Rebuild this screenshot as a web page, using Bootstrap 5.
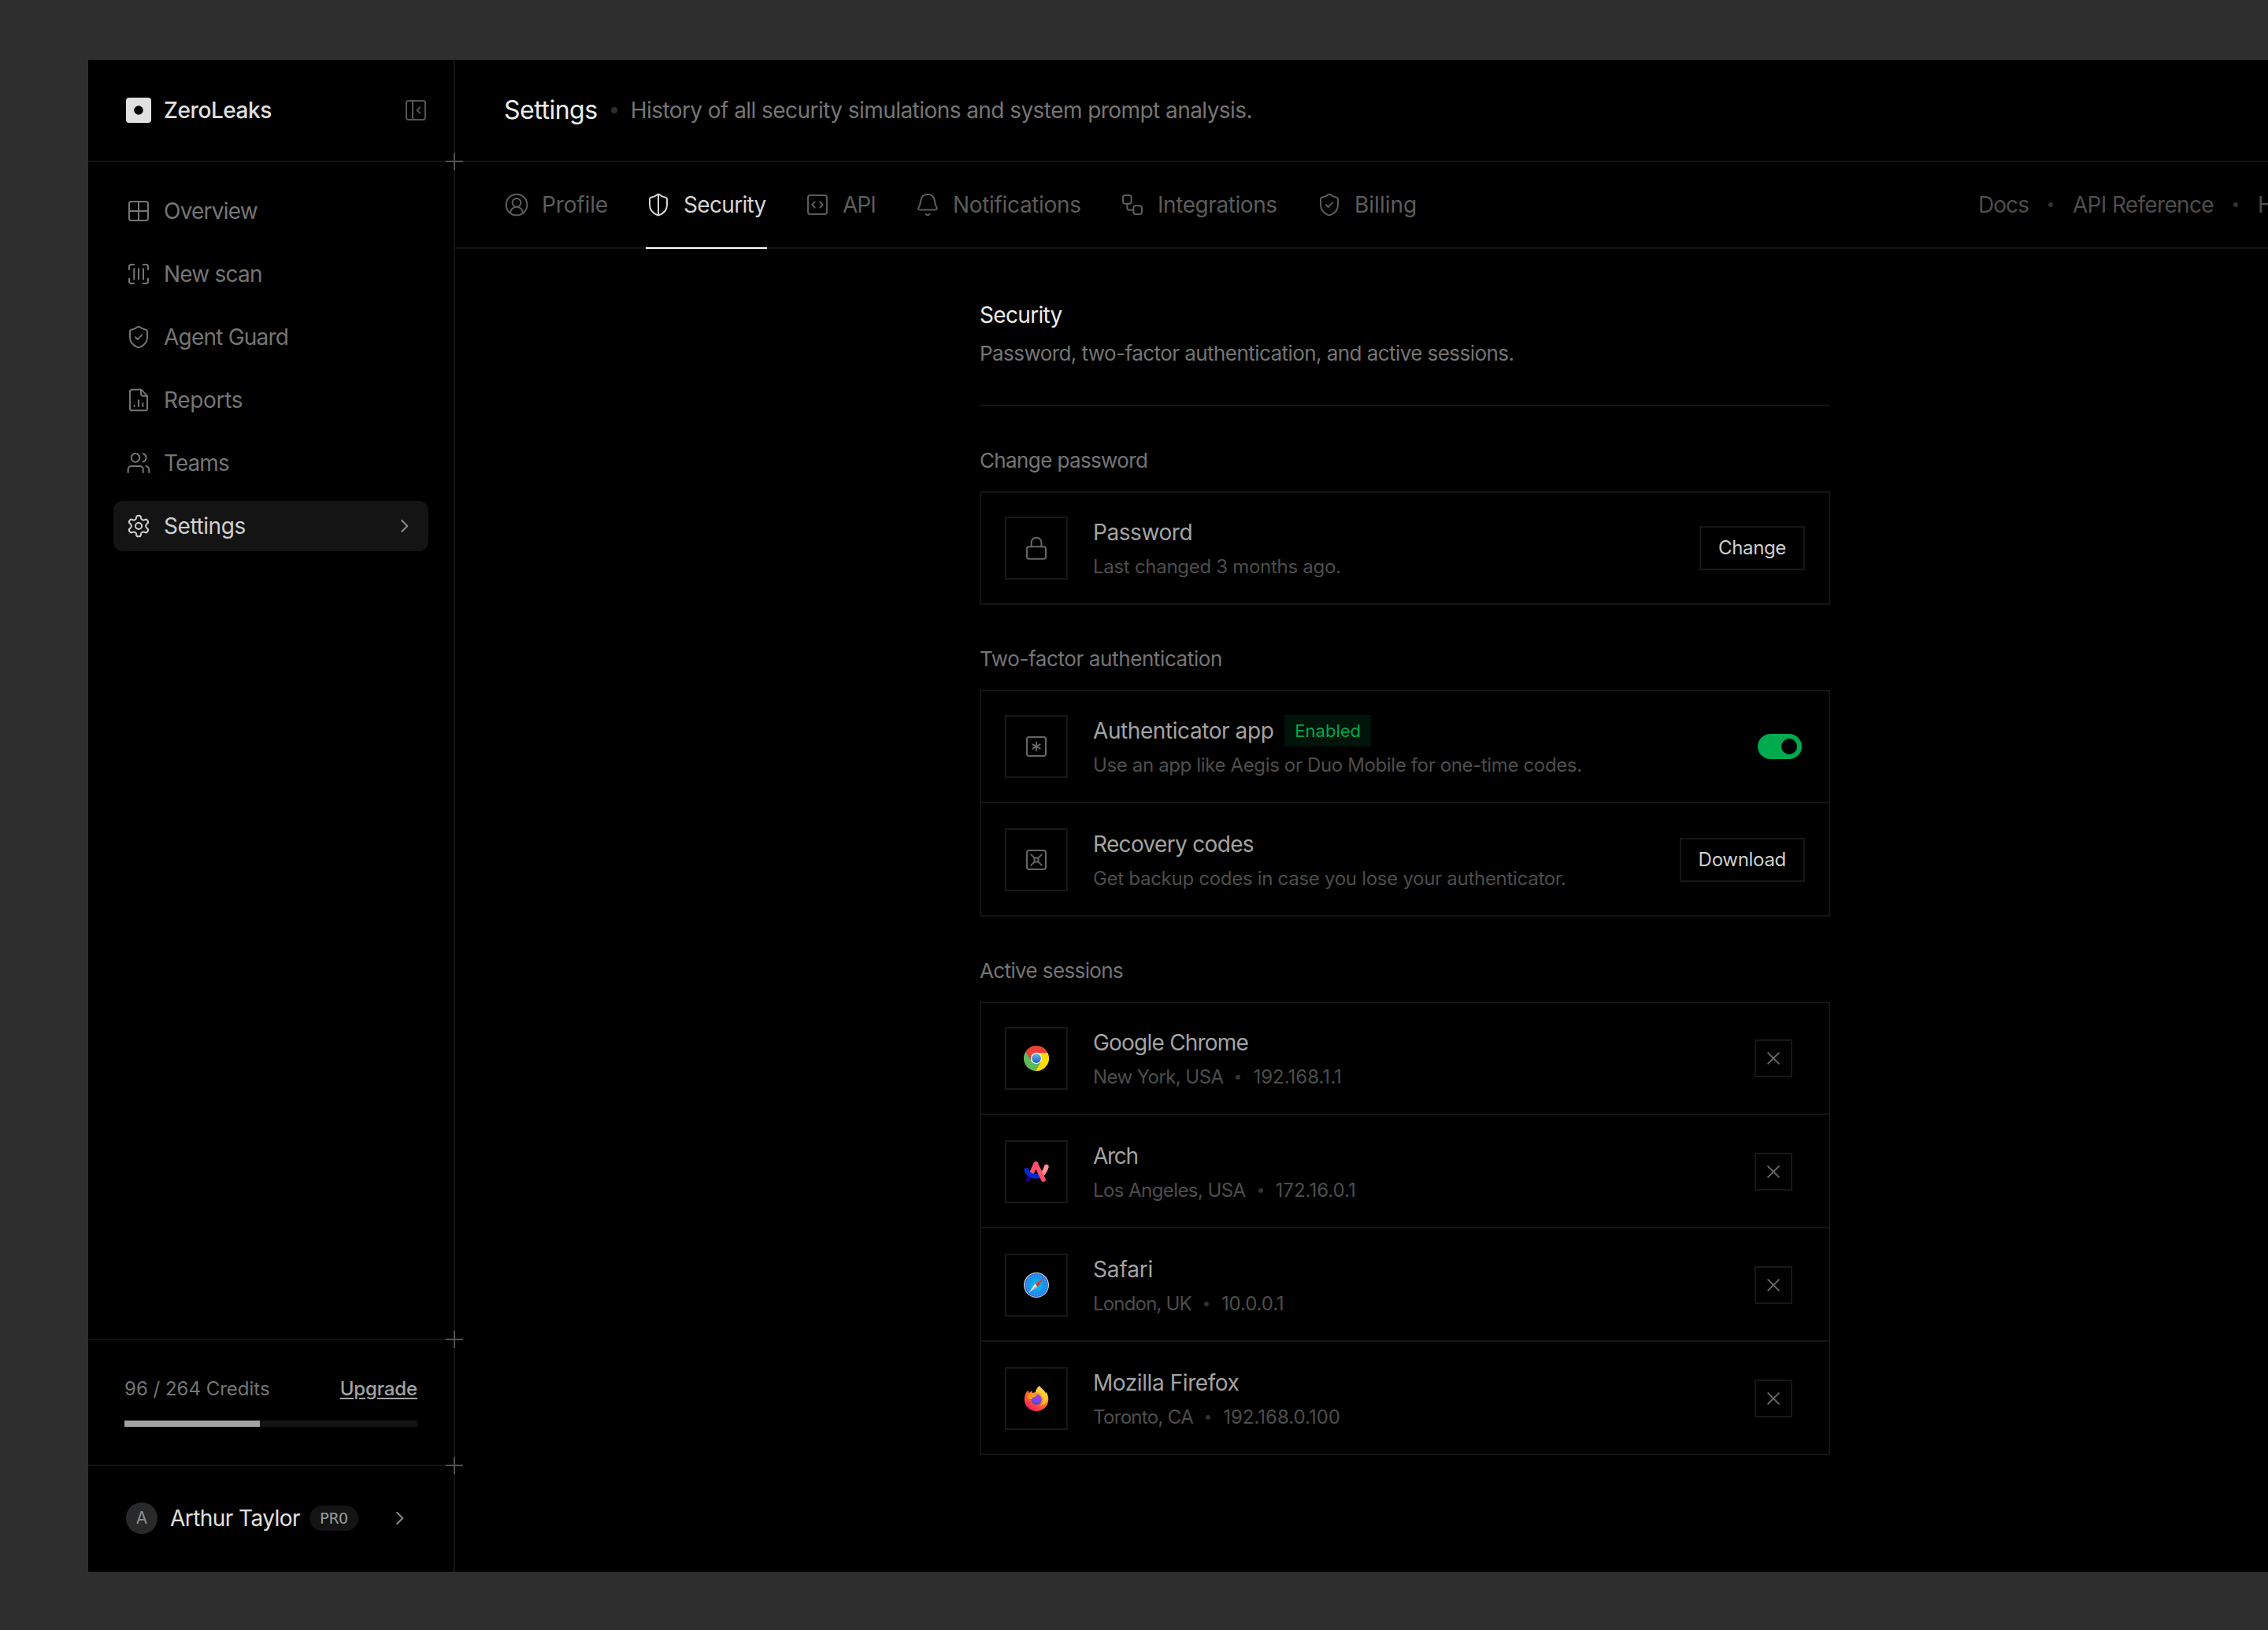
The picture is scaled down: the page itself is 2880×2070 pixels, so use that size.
<!DOCTYPE html>
<html lang="en">
<head>
<meta charset="utf-8">
<meta name="viewport" content="width=device-width, initial-scale=1">
<title>ZeroLeaks – Settings</title>
<link href="https://cdn.jsdelivr.net/npm/bootstrap@5.3.0/dist/css/bootstrap.min.css" rel="stylesheet">
<style>
  :root { --line: #141414; --ink: #ededed; --ink-2: #a3a3a3; --ink-3: #757575; --ink-4: #5c5c5c; --ink-5: #4d4d4d; }
  body { background: #2e2e2e; padding: 76px 0 0 112px; overflow: hidden; height: 2070px; font-family: Inter, "Liberation Sans", sans-serif; font-size: 28px; line-height: 40px; color: var(--ink-2); letter-spacing: -.02em; }
  a { color: inherit; text-decoration: none; }
  svg { flex: none; display: block; }
  .ico { width: 32px; height: 32px; fill: none; stroke: currentColor; stroke-width: 1.5; stroke-linecap: round; stroke-linejoin: round; }
  .app-frame { width: 2880px; height: 1920px; background: #000; }

  /* tracking steps */
  .tr0 { letter-spacing: 0; } .tr5 { letter-spacing: -.005em; } .tr12 { letter-spacing: -.012em; } .tr15 { letter-spacing: -.015em; }
  .tr24 { letter-spacing: -.024em; } .tr28 { letter-spacing: -.028em; } .tr34 { letter-spacing: -.034em; } .tr45 { letter-spacing: -.045em; }

  /* sidebar */
  .side { width: 466px; flex: none; border-right: 2px solid var(--line); }
  .side-head { height: 130px; padding: 0 32px 0 48px; border-bottom: 2px solid var(--line); }
  .brand-name { color: #e0e0e0; font-weight: 500; }
  .side-nav { padding: 30px 32px 0; gap: 16px; }
  .side-link { height: 64px; padding: 0 14px 0 16px; gap: 16px; border-radius: 12px; color: var(--ink-3); }
  .side-link.current { background: #141414; color: #d0d0d0; }
  .chev { color: #8a8a8a; }
  .credit-box { height: 160px; border-top: 2px solid var(--line); padding: 46px 46px 0; font-size: 24px; line-height: 32px; color: var(--ink-3); }
  .upgrade { color: var(--ink-2); font-weight: 500; text-decoration: underline; text-decoration-thickness: 1.5px; text-underline-offset: 3px; }
  .meter { height: 8px; margin-top: 24px; border-radius: 0; background: #141414; }
  .meter .progress-bar { background: #a3a3a3; }
  .user-box { height: 136px; border-top: 2px solid var(--line); padding: 0 52px 2px 48px; }
  .user-name { color: #e0e0e0; }
  .face { width: 40px; height: 40px; background: #292929; color: #8f8f8f; font-size: 21px; letter-spacing: 0; }
  .pro { height: 32px; padding: 0 13px; margin-left: 12px; border-radius: 16px; background: #141414; color: #999; font: 20px/32px "DejaVu Sans Mono", monospace; letter-spacing: 0; }
  .cross::after, .cross-top::after { content: ""; position: absolute; right: -12px; width: 22px; height: 22px; background: linear-gradient(#525252,#525252) center/100% 2px no-repeat, linear-gradient(#525252,#525252) center/2px 100% no-repeat; }
  .cross::after { bottom: -12px; } .cross-top::after { top: -12px; }

  /* header + tabs */
  .page-head { height: 130px; padding: 0 0 0 62px; gap: 17px; border-bottom: 2px solid var(--line); color: var(--ink-3); }
  .page-name { font-size: 32px; color: var(--ink); font-weight: 400; margin: 0; }
  .pt { flex: none; border-radius: 50%; background: #333; width: 6px; height: 6px; }
  .pt-lg { width: 8px; height: 8px; background: #2e2e2e; }
  .tab-row { height: 110px; padding-left: 62px; border-bottom: 2px solid var(--line); color: var(--ink-4); }
  .tab-set { gap: 48px; }
  .tab-item { gap: 16px; margin-bottom: -2px; border-bottom: 2px solid transparent; white-space: nowrap; }
  .tab-item.current { color: #d6d6d6; border-bottom-color: #fff; }
  .tab-item:nth-child(1) { width: 132px; }
  .tab-item:nth-child(2) { width: 154px; }
  .tab-item:nth-child(3) { width: 92px; }
  .tab-item:nth-child(4) { width: 212px; }
  .tab-item:nth-child(5) { width: 202px; }
  .doc-links { width: 480px; gap: 25px; color: var(--ink-5); white-space: nowrap; }

  /* settings column */
  .pane { width: 1080px; margin-left: 666px; padding-top: 64px; }
  .pane-head { padding-bottom: 47px; border-bottom: 2px solid var(--line); }
  .pane-head h2 { font-size: 28px; line-height: 40px; font-weight: 400; color: var(--ink); margin: 0 0 11px; }
  .pane-head p, .group-name { font-size: 26px; line-height: 36px; color: var(--ink-3); margin: 0; font-weight: 400; }
  .group-name { margin: 51px 0 21px; }
  .panel { border: 2px solid var(--line); }
  .line-item { padding: 30px; border-bottom: 2px solid var(--line); gap: 32px; }
  .line-item:last-child { border-bottom: 0; }
  .line-item + .line-item { padding-top: 32px; }
  .tile { width: 80px; height: 80px; flex: none; border: 2px solid #171717; color: #666; }
  .words { height: 80px; }
  .words .sub { font-size: 24px; line-height: 32px; color: var(--ink-5); margin-top: 8px; }
  .on-tag { font-size: 22px; line-height: 40px; height: 40px; padding: 0 13px; margin-left: 14px; background: #001409; color: #00a64d; }
  .act { height: 56px; padding: 0 22px; border: 2px solid #171717; border-radius: 0; font-size: 24px; line-height: 52px; color: #cfcfcf; }
  .close-btn { width: 48px; height: 48px; border: 2px solid #171717; margin-right: 16px; color: #6b6b6b; background: none; padding: 0; }
  .close-btn svg { overflow: visible; }
  .toggle { width: 56px; height: 32px; border-radius: 16px; background: #00ab4f; padding: 0 6px; margin-right: 4px; }
  .toggle span { width: 20px; height: 20px; border-radius: 50%; background: #000; }
</style>
<script src="https://cdn.jsdelivr.net/npm/bootstrap@5.3.0/dist/js/bootstrap.bundle.min.js"></script>
</head>
<body>

<svg width="0" height="0" class="position-absolute" aria-hidden="true">
  <defs>
    <symbol id="i-chev" viewBox="0 0 24 24"><path d="M9.2 6.7 14.5 12 9.2 17.3"/></symbol>
    <symbol id="i-shield" viewBox="0 0 24 24"><path id="shield-line" d="M10.9 2.5C9.6 3.7 7.4 4.6 5.1 5c-.8.15-1.35.7-1.35 1.5V12c0 5.3 3.2 8.2 7.4 9.8.6.22 1.1.22 1.7 0 4.2-1.6 7.4-4.5 7.4-9.8V6.500c0-.8-.55-1.35-1.35-1.5-2.3-.4-4.5-1.3-5.8-2.5-.7-.6-1.5-.6-2.2 0z"/></symbol>
    <linearGradient id="g-chrome" x1="0" y1="0" x2="0" y2="1"><stop offset="0" stop-color="#6fb3e6"/><stop offset="1" stop-color="#1668b8"/></linearGradient>
    <radialGradient id="g-safari"><stop offset="0" stop-color="#06c2e7"/><stop offset=".5" stop-color="#13a3ef"/><stop offset="1" stop-color="#1f6fe5"/></radialGradient>
    <linearGradient id="g-safari-rim" x1="0" y1="0" x2="0" y2="1"><stop offset="0" stop-color="#e6e6e6"/><stop offset="1" stop-color="#b4b4b4"/></linearGradient>
    <linearGradient id="g-fox" x1=".85" y1=".05" x2=".25" y2="1"><stop offset="0" stop-color="#fff04a"/><stop offset=".3" stop-color="#ffb02c"/><stop offset=".55" stop-color="#ff6a2b"/><stop offset=".8" stop-color="#ff3b47"/><stop offset="1" stop-color="#e3156b"/></linearGradient>
    <radialGradient id="g-globe" cx=".6" cy=".2" r=".9"><stop offset="0" stop-color="#b833e1"/><stop offset=".5" stop-color="#7a4bea"/><stop offset="1" stop-color="#4a45b0"/></radialGradient>
    <linearGradient id="g-face" x1="0" y1="0" x2="1" y2=".6"><stop offset="0" stop-color="#ff7a22"/><stop offset="1" stop-color="#ffb61e"/></linearGradient>
  </defs>
</svg>

<div class="app-frame d-flex">

  <aside class="side d-flex flex-column">
    <div class="side-head cross position-relative d-flex align-items-center">
      <svg width="32" height="32" viewBox="0 0 32 32"><rect width="32" height="32" rx="4" fill="#e0e0e0"/><circle cx="16" cy="16" r="5.8" fill="#000"/></svg>
      <span class="brand-name tr15 ms-3">ZeroLeaks</span>
      <svg class="ico ms-auto" viewBox="0 0 24 24" stroke-width="1.5" color="#555"><rect x="3" y="3" width="18" height="18" rx="2"/><path d="M9 3v18M16 9.25 13.25 12 16 14.75"/></svg>
    </div>

    <nav class="side-nav d-flex flex-column">
      <a href="#" class="side-link d-flex align-items-center"><svg class="ico" viewBox="0 0 24 24"><rect x="3" y="3" width="18" height="18" rx="2"/><path d="M12 3v18M3 12h18"/></svg><span class="tr28">Overview</span></a>
      <a href="#" class="side-link d-flex align-items-center"><svg class="ico" viewBox="0 0 24 24"><path d="M7.7 3H5a2 2 0 0 0-2 2v2.7M16.3 3H19a2 2 0 0 1 2 2v2.7M7.7 21H5a2 2 0 0 1-2-2v-2.7M16.3 21H19a2 2 0 0 0 2-2v-2.7M7.7 7v10M12 7v10M16.5 7v10"/></svg><span class="tr28">New scan</span></a>
      <a href="#" class="side-link d-flex align-items-center"><svg class="ico" viewBox="0 0 24 24"><use href="#shield-line"/><path d="m9 12.1 2.1 2.1 4-4.2"/></svg><span class="tr28">Agent Guard</span></a>
      <a href="#" class="side-link d-flex align-items-center"><svg class="ico" viewBox="0 0 24 24"><path d="M14.25 2H5.75a2 2 0 0 0-2 2v16a2 2 0 0 0 2 2h12.5a2 2 0 0 0 2-2V8zM14.25 2v4a2 2 0 0 0 2 2h4M8 17.25V18M12 12.25V18M16 15v3"/></svg><span class="tr12">Reports</span></a>
      <a href="#" class="side-link d-flex align-items-center"><svg class="ico" viewBox="0 0 24 24"><path d="M16.3 21v-3a3 3 0 0 0-3-3H5a3 3 0 0 0-3 3v3M22 21v-2.4a4 4 0 0 0-3-3.7M16.2 3.13a4 4 0 0 1 0 7.75"/><circle cx="9" cy="7" r="4"/></svg><span class="tr34">Teams</span></a>
      <a href="#" class="side-link current d-flex align-items-center"><svg class="ico" viewBox="0 0 24 24"><path d="M12.22 2h-.44a2 2 0 0 0-2 2v.18a2 2 0 0 1-1 1.73l-.43.25a2 2 0 0 1-2 0l-.15-.08a2 2 0 0 0-2.73.73l-.22.38a2 2 0 0 0 .73 2.73l.15.1a2 2 0 0 1 1 1.72v.51a2 2 0 0 1-1 1.74l-.15.09a2 2 0 0 0-.73 2.73l.22.38a2 2 0 0 0 2.73.73l.15-.08a2 2 0 0 1 2 0l.43.25a2 2 0 0 1 1 1.73V20a2 2 0 0 0 2 2h.44a2 2 0 0 0 2-2v-.18a2 2 0 0 1 1-1.73l.43-.25a2 2 0 0 1 2 0l.15.08a2 2 0 0 0 2.73-.73l.22-.39a2 2 0 0 0-.73-2.73l-.15-.08a2 2 0 0 1-1-1.74v-.5a2 2 0 0 1 1-1.74l.15-.09a2 2 0 0 0 .73-2.73l-.22-.38a2 2 0 0 0-2.73-.73l-.15.08a2 2 0 0 1-2 0l-.43-.25a2 2 0 0 1-1-1.73V4a2 2 0 0 0-2-2z"/><circle cx="12" cy="12" r="3"/></svg><span class="tr15">Settings</span><svg class="ico chev ms-auto"><use href="#i-chev"/></svg></a>
    </nav>

    <div class="credit-box cross-top position-relative mt-auto">
      <div class="d-flex justify-content-between"><span class="tr0">96 / 264 Credits</span><a href="#" class="upgrade tr5">Upgrade</a></div>
      <div class="progress meter"><div class="progress-bar" style="width:46.2%"></div></div>
    </div>
    <div class="user-box cross-top position-relative d-flex align-items-center">
      <span class="face rounded-circle d-flex align-items-center justify-content-center">A</span>
      <span class="user-name ms-3">Arthur Taylor</span>
      <span class="pro">PRO</span>
      <svg class="ico chev ms-auto"><use href="#i-chev"/></svg>
    </div>
  </aside>

  <main class="flex-grow-1">
    <header class="page-head d-flex align-items-center">
      <h1 class="page-name tr15">Settings</h1><span class="pt pt-lg"></span><span>History of all security simulations and system prompt analysis.</span>
    </header>

    <div class="tab-row d-flex">
      <nav class="tab-set d-flex">
        <a href="#" class="tab-item d-flex align-items-center"><svg class="ico" viewBox="0 0 24 24"><circle cx="12" cy="12" r="10"/><circle cx="12" cy="10" r="4"/><path d="M18 20a6 6 0 0 0-12 0"/></svg><span class="tr5">Profile</span></a>
        <a href="#" class="tab-item current d-flex align-items-center"><svg class="ico" viewBox="0 0 24 24"><use href="#shield-line"/><path d="M12 2v20"/></svg><span class="tr24">Security</span></a>
        <a href="#" class="tab-item d-flex align-items-center"><svg class="ico" viewBox="0 0 24 24"><rect x="3" y="3" width="18" height="18" rx="2"/><path d="M9.5 9.25 7 12l2.5 2.75M14.5 9.25 17 12l-2.5 2.75"/></svg><span class="tr34">API</span></a>
        <a href="#" class="tab-item d-flex align-items-center"><svg class="ico" viewBox="0 0 24 24"><path d="M12 2a6.7 6.7 0 0 0-6.7 6.3c-.15 2.3-.5 3.8-1.5 5.6-.5.9-.8 1.4-.7 1.9.2.7.7 1 1.5 1h14.8c.8 0 1.3-.3 1.5-1 .1-.5-.2-1-.7-1.9-1-1.8-1.35-3.3-1.5-5.6A6.7 6.7 0 0 0 12 2zM10.2 20.9c.4.7 1 1 1.8 1s1.4-.3 1.8-1"/></svg><span class="tr12">Notifications</span></a>
        <a href="#" class="tab-item d-flex align-items-center"><svg class="ico" viewBox="0 0 24 24"><rect x="3" y="3" width="8" height="8" rx="2"/><path d="M7 11v4a2 2 0 0 0 2 2h4"/><rect x="13" y="13" width="8" height="8" rx="2"/></svg><span class="tr15">Integrations</span></a>
        <a href="#" class="tab-item d-flex align-items-center"><svg class="ico" viewBox="0 0 24 24"><use href="#shield-line"/><path d="m9 12.1 2.1 2.1 4-4.2"/></svg><span class="tr0">Billing</span></a>
      </nav>
      <div class="doc-links d-flex align-items-center ms-auto">
        <a href="#" class="tr34">Docs</a><span class="pt"></span><a href="#" class="tr24">API Reference</a><span class="pt"></span><a href="#">Help</a>
      </div>
    </div>

    <section class="pane">
      <div class="pane-head">
        <h2 class="tr24">Security</h2>
        <p>Password, two-factor authentication, and active sessions.</p>
      </div>

      <h3 class="group-name tr24">Change password</h3>
      <div class="panel">
        <div class="line-item d-flex align-items-center">
          <div class="tile d-flex align-items-center justify-content-center"><svg class="ico" viewBox="0 0 24 24"><rect x="3" y="10.7" width="18" height="11.6" rx="2"/><path d="M7.2 10.7V6.8a4.8 4.8 0 0 1 9.6 0v3.9"/></svg></div>
          <div class="words flex-grow-1"><div class="tr15">Password</div><div class="sub tr12">Last changed 3 months ago.</div></div>
          <button type="button" class="btn act tr15">Change</button>
        </div>
      </div>

      <h3 class="group-name tr15">Two-factor authentication</h3>
      <div class="panel">
        <div class="line-item d-flex align-items-center">
          <div class="tile d-flex align-items-center justify-content-center"><svg class="ico" viewBox="0 0 24 24"><rect x="3" y="3" width="18" height="18" rx="2"/><path d="M12 8v8M8.5 14l7-4M8.5 10l7 4"/></svg></div>
          <div class="words flex-grow-1"><div class="d-flex"><span class="tr15">Authenticator app</span><span class="on-tag tr0">Enabled</span></div><div class="sub tr15">Use an app like Aegis or Duo Mobile for one-time codes.</div></div>
          <div class="toggle d-flex align-items-center justify-content-end" role="switch" aria-checked="true"><span></span></div>
        </div>
        <div class="line-item d-flex align-items-center">
          <div class="tile d-flex align-items-center justify-content-center"><svg class="ico" viewBox="0 0 24 24"><rect x="3" y="3" width="18" height="18" rx="2"/><circle cx="12" cy="12" r="2"/><path d="M7 7l3.6 3.6M17 7l-3.6 3.6M7 17l3.6-3.6M17 17l-3.6-3.6"/></svg></div>
          <div class="words flex-grow-1"><div class="tr24">Recovery codes</div><div class="sub tr12">Get backup codes in case you lose your authenticator.</div></div>
          <button type="button" class="btn act tr12">Download</button>
        </div>
      </div>

      <h3 class="group-name tr24">Active sessions</h3>
      <div class="panel">
        <div class="line-item d-flex align-items-center">
          <div class="tile d-flex align-items-center justify-content-center"><svg width="32" height="32" viewBox="0 0 32 32"><path fill="#5eb95a" d="M2.74 7.03 9.94 19.5 22.06 19.5 14.86 31.97A16 16 0 0 1 2.74 7.03z"/><path fill="#fddc02" d="M30.4 9H16v7l6.06 3.5-7.2 12.47A16 16 0 0 0 30.4 9z"/><path fill="#f03f36" d="M30.4 9H16L9.94 19.5 2.74 7.03A16 16 0 0 1 30.4 9z"/><circle cx="16" cy="16" r="7.2" fill="#fff"/><circle cx="16" cy="16" r="5.9" fill="url(#g-chrome)"/></svg></div>
          <div class="words flex-grow-1"><div class="tr28">Google Chrome</div><div class="sub d-flex align-items-center gap-3"><span class="tr24">New York, USA</span><span class="pt"></span><span class="tr0">192.168.1.1</span></div></div>
          <button type="button" class="close-btn d-flex align-items-center justify-content-center" aria-label="Revoke session"><svg width="16" height="16" viewBox="0 0 16 16" fill="none" stroke="currentColor" stroke-width="1.8"><path d="M.6.6l14.8 14.8M15.4.6.6 15.4"/></svg></button>
        </div>
        <div class="line-item d-flex align-items-center">
          <div class="tile d-flex align-items-center justify-content-center"><svg width="32" height="32" viewBox="0 0 32 32" fill="none" stroke-width="5.8" stroke-linecap="round" stroke-linejoin="round"><path stroke="#1b0082" d="M5.7 25.8 8.6 20"/><path stroke="#ff9396" d="M28.8 9.6Q27.4 15.500 23 19.500"/><path stroke="#ff4f6b" d="M10 17.800 15.300 6"/><path stroke="#0029d6" d="M3.300 13.800Q6.800 21.700 15 21.800 18 21.800 20.500 20.800"/><path stroke="#ff4f6b" d="M15.300 6 24.900 26"/></svg></div>
          <div class="words flex-grow-1"><div class="tr45">Arch</div><div class="sub d-flex align-items-center gap-3"><span class="tr24">Los Angeles, USA</span><span class="pt"></span><span class="tr0">172.16.0.1</span></div></div>
          <button type="button" class="close-btn d-flex align-items-center justify-content-center" aria-label="Revoke session"><svg width="16" height="16" viewBox="0 0 16 16" fill="none" stroke="currentColor" stroke-width="1.8"><path d="M.6.6l14.8 14.8M15.4.6.6 15.4"/></svg></button>
        </div>
        <div class="line-item d-flex align-items-center">
          <div class="tile d-flex align-items-center justify-content-center"><svg width="32" height="32" viewBox="0 0 32 32"><circle cx="16" cy="16" r="16" fill="url(#g-safari-rim)"/><circle cx="16" cy="16" r="14.9" fill="url(#g-safari)"/><circle cx="16" cy="16" r="12.6" fill="none" stroke="#fff" stroke-opacity=".55" stroke-width="1.6" stroke-dasharray=".5 1.7"/><path fill="#f2f2f2" d="M14.3 14.2 17.7 17.8 6.3 25.7z"/><path fill="#ff3c38" d="M14.3 14.2 17.7 17.8 25.5 6.5z"/><path fill="#000" fill-opacity=".18" d="M16 16 17.7 17.8 25.5 6.5zM16 16 17.7 17.8 6.3 25.7z"/></svg></div>
          <div class="words flex-grow-1"><div class="tr5">Safari</div><div class="sub d-flex align-items-center gap-3"><span class="tr34">London, UK</span><span class="pt"></span><span class="tr5">10.0.0.1</span></div></div>
          <button type="button" class="close-btn d-flex align-items-center justify-content-center" aria-label="Revoke session"><svg width="16" height="16" viewBox="0 0 16 16" fill="none" stroke="currentColor" stroke-width="1.8"><path d="M.6.6l14.8 14.8M15.4.6.6 15.4"/></svg></button>
        </div>
        <div class="line-item d-flex align-items-center">
          <div class="tile d-flex align-items-center justify-content-center"><svg width="32" height="32" viewBox="0 0 32 32"><path fill="url(#g-fox)" d="M20.2 0c-2.6 1.6-4.8 4.6-5 7.9-1.6.1-3 .5-4.3 1.2-.5-.9-.6-2-.4-3.1-1.6.8-2.8 1.9-3.7 3C6.2 8.3 5.9 6.6 6 5.2 2.4 8.3.8 12.7.8 17.2.8 25.5 7.6 32 16 32s15.3-6.5 15.3-14.8c0-3.4-1-7.3-3.3-9.9.2 1 .2 1.7.2 2.4C26.7 5.6 22.8 4 20.2 0z"/><circle cx="16" cy="17.2" r="6.7" fill="url(#g-globe)"/><path fill="#ffd43a" fill-opacity=".75" d="M20.2 0c-2.6 1.6-4.8 4.6-5 7.9 4.5-.2 8.6 2.8 9.3 8 .5 4-1.3 7.2-4.3 9 5-.6 9-4.2 9.2-9.4C29.6 9.6 23.4 6 20.2 0z"/><path fill="url(#g-face)" d="M7.2 9C10 8.7 12 9.8 12.9 11.3h4c0 1.2-1.6 2.2-3.5 2.7-1.7.5-2.9 1.4-3 3.3L4 15.5z"/></svg></div>
          <div class="words flex-grow-1"><div class="tr15">Mozilla Firefox</div><div class="sub d-flex align-items-center gap-3"><span class="tr28">Toronto, CA</span><span class="pt"></span><span class="tr0">192.168.0.100</span></div></div>
          <button type="button" class="close-btn d-flex align-items-center justify-content-center" aria-label="Revoke session"><svg width="16" height="16" viewBox="0 0 16 16" fill="none" stroke="currentColor" stroke-width="1.8"><path d="M.6.6l14.8 14.8M15.4.6.6 15.4"/></svg></button>
        </div>
      </div>
    </section>
  </main>
</div>
</body>
</html>
